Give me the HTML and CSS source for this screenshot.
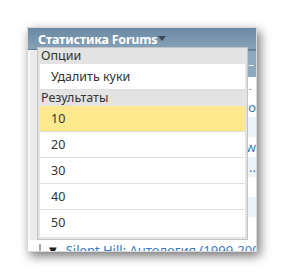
FILE: index.html
```html
<!DOCTYPE html>
<html lang="ru">
<head>
    <meta charset="UTF-8">
    <title>Статистика Forums</title>
    <link rel="stylesheet" href="styles.css">
</head>
<body>
    <div class="window">
        <div class="title">Статистика Forums<span class="caret"></span></div>
        <div class="body">
            <div class="side"></div>
            <div class="main">
                <div class="subbar"><span class="dash">–</span></div>
                <div class="row"><span class="minus">-</span></div>
                <div class="row"><a class="link">то</a></div>
                <div class="row alt"></div>
                <div class="row"><a class="link">w</a></div>
                <div class="row alt"><a class="link">..</a></div>
                <div class="row"></div>
                <div class="row alt"></div>
                <div class="row"></div>
            </div>
        </div>
        <div class="foot-row">
            <span class="doc"></span>
            <span class="tri">▼</span>
            <a class="link">Silent Hill: Антология (1999-200</a>
        </div>

        <div class="menu">
            <div class="menu-head">Опции</div>
            <div class="menu-item">Удалить куки</div>
            <div class="menu-head">Результаты</div>
            <div class="menu-item active">10</div>
            <div class="menu-item">20</div>
            <div class="menu-item">30</div>
            <div class="menu-item">40</div>
            <div class="menu-item last">50</div>
        </div>
    </div>
</body>
</html>
```

FILE: styles.css
```css
* {
    margin: 0;
    padding: 0;
    box-sizing: border-box;
}

body {
    background: #ffffff;
    font-family: 'Noto Sans', 'DejaVu Sans', sans-serif;
    width: 283px;
    height: 279px;
    overflow: hidden;
}

.window {
    position: relative;
    margin: 27px 0 0 27px;
    width: 230px;
    height: 225px;
    overflow: hidden;
    background: #ffffff;
    border: 1px solid #d8d8d8;
    box-shadow: 3px 4px 10px rgba(0, 0, 0, 0.55);
}

.title {
    height: 22px;
    background: linear-gradient(#6a89a3, #87a2b9);
    border-bottom: 1px solid #5f7d96;
    color: #ffffff;
    font-weight: bold;
    font-size: 12.5px;
    letter-spacing: -0.2px;
    line-height: 23px;
    padding-left: 10px;
    white-space: nowrap;
}

.caret {
    display: inline-block;
    width: 0;
    height: 0;
    border-left: 4px solid transparent;
    border-right: 4px solid transparent;
    border-top: 5px solid #3f4c58;
    margin-left: 1px;
    vertical-align: 3px;
}

.body {
    display: flex;
    height: 190px;
}

.side {
    width: 10px;
    background: #ebebeb;
    border-left: 2px solid #f6f6f6;
}

.main {
    flex: 1;
    overflow: hidden;
}

.subbar {
    height: 27px;
    background: #8ea8bd;
    border-top: 1px solid #6d8aa2;
    text-align: right;
    padding-right: 2px;
}

.dash {
    color: #ffffff;
    font-size: 11px;
    line-height: 16px;
}

.row {
    height: 20px;
    white-space: nowrap;
    font-size: 13px;
    line-height: 20px;
    text-align: right;
    color: #999;
}

.row.alt {
    background: #eef3f8;
}

.minus {
    font-size: 10px;
    padding-right: 4px;
}

.link {
    color: #3a7ac0;
}

.foot-row {
    padding: 2px 0 0 11px;
    white-space: nowrap;
    font-size: 13px;
    line-height: 16px;
    display: flex;
    align-items: center;
}

.doc {
    display: inline-block;
    width: 10px;
    height: 13px;
    border: 1px solid #aaaaaa;
    background: #fafafa;
    margin-right: 8px;
}

.tri {
    color: #222;
    font-size: 10px;
    margin-right: 9px;
}

.menu {
    position: absolute;
    left: 9px;
    top: 19px;
    width: 211px;
    background: #e3e3e3;
    border: 1px solid #c4c4c4;
    padding: 0 2px 2px 2px;
    font-size: 12.5px;
    color: #333333;
}

.menu-head {
    height: 16px;
    line-height: 16px;
    padding-left: 1px;
}

.menu-item {
    height: 26px;
    line-height: 25px;
    background: #ffffff;
    border-bottom: 1px solid #dedede;
    padding-left: 11px;
}

.menu-item.last {
    border-bottom: none;
    height: 27px;
}

.menu-item.active {
    background: #fee98f;
}
```
